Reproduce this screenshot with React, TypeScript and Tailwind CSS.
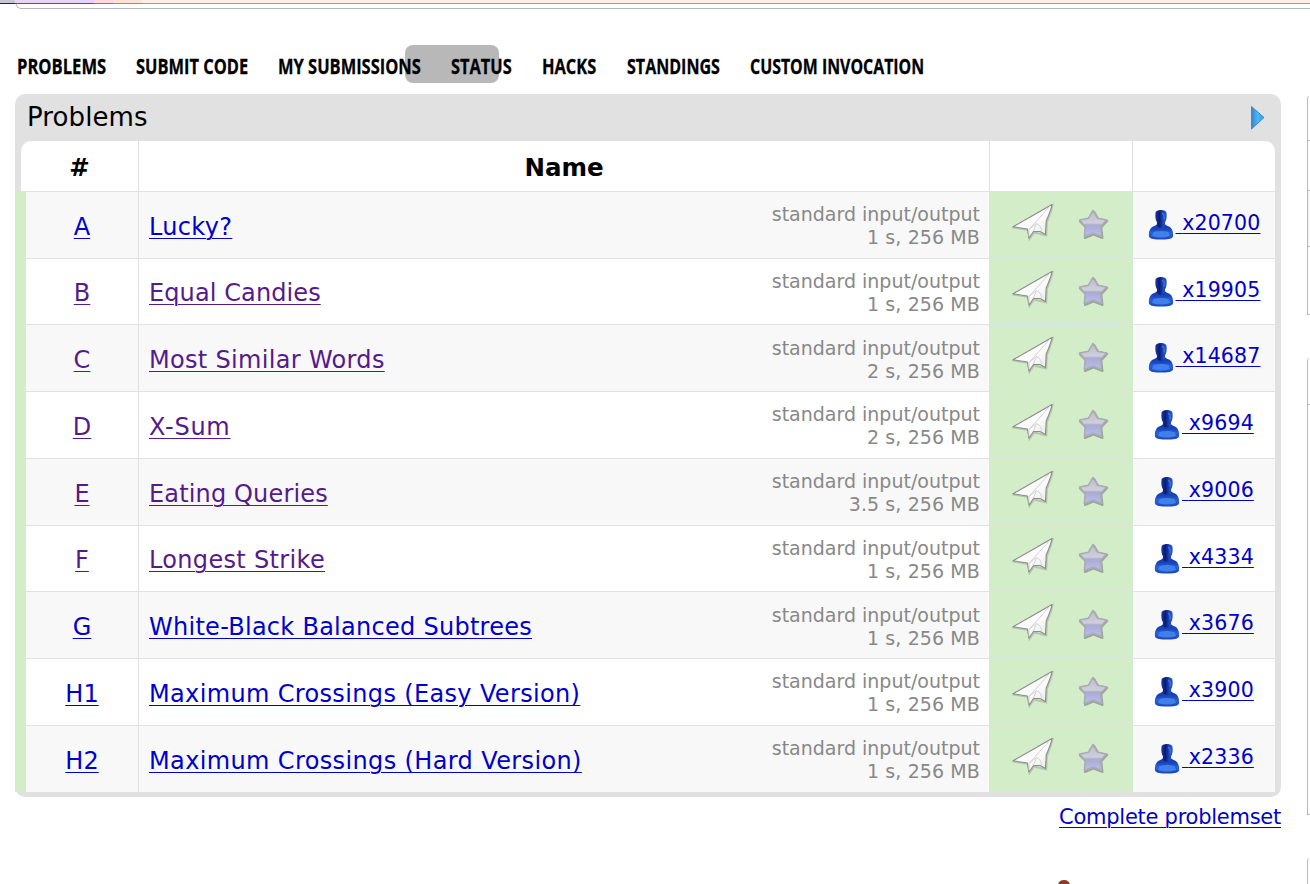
import React from "react";

const problems = [
  { id: "A", name: "Lucky?", limit: "1 s, 256 MB", solved: "x20700", visited: false, h: "h-[67px]", lead: "leading-[71px]", track: "tracking-[.33px]", pad: "pt-[11px]" },
  { id: "B", name: "Equal Candies", limit: "1 s, 256 MB", solved: "x19905", visited: true, h: "h-[66px]", lead: "leading-[69px]", track: "tracking-[.1px]", pad: "pt-[11px]" },
  { id: "C", name: "Most Similar Words", limit: "2 s, 256 MB", solved: "x14687", visited: true, h: "h-[67px]", lead: "leading-[71px]", track: "tracking-[.32px]", pad: "pt-[12px]" },
  { id: "D", name: "X-Sum", limit: "2 s, 256 MB", solved: "x9694", visited: true, h: "h-[67px]", lead: "leading-[71px]", track: "tracking-[.75px]", pad: "pt-[11px]" },
  { id: "E", name: "Eating Queries", limit: "3.5 s, 256 MB", solved: "x9006", visited: true, h: "h-[67px]", lead: "leading-[71px]", track: "tracking-[.15px]", pad: "pt-[11px]" },
  { id: "F", name: "Longest Strike", limit: "1 s, 256 MB", solved: "x4334", visited: true, h: "h-[66px]", lead: "leading-[69px]", track: "tracking-[.33px]", pad: "pt-[11px]" },
  { id: "G", name: "White-Black Balanced Subtrees", limit: "1 s, 256 MB", solved: "x3676", visited: false, h: "h-[67px]", lead: "leading-[71px]", track: "tracking-[.27px]", pad: "pt-[12px]" },
  { id: "H1", name: "Maximum Crossings (Easy Version)", limit: "1 s, 256 MB", solved: "x3900", visited: false, h: "h-[67px]", lead: "leading-[71px]", track: "tracking-[.35px]", pad: "pt-[11px]" },
  { id: "H2", name: "Maximum Crossings (Hard Version)", limit: "1 s, 256 MB", solved: "x2336", visited: false, h: "h-[67px]", lead: "leading-[71px]", track: "tracking-[.37px]", pad: "pt-[11px]" },
];

const menu = [
  { label: "PROBLEMS", w: "w-[89px]", scale: "scale-x-[.79]" },
  { label: "SUBMIT CODE", w: "w-[112px]", scale: "scale-x-[.782]" },
  { label: "MY SUBMISSIONS", w: "w-[143px]", scale: "scale-x-[.784]" },
  { label: "STATUS", w: "w-[61px]", scale: "scale-x-[.78]" },
  { label: "HACKS", w: "w-[55px]", scale: "scale-x-[.78]" },
  { label: "STANDINGS", w: "w-[93px]", scale: "scale-x-[.764]" },
  { label: "CUSTOM INVOCATION", w: "w-[174px]", scale: "scale-x-[.757]" },
];

function Plane() {
  return (
    <svg className="block h-[40px] w-[44px] shrink-0" viewBox="0 0 44 40">
      <defs>
        <linearGradient id="paper" x1="0" y1="0" x2="1" y2="1">
          <stop offset="0" stopColor="#fff" />
          <stop offset=".6" stopColor="#fafafa" />
          <stop offset="1" stopColor="#e2e2e2" />
        </linearGradient>
      </defs>
      <path d="M1.500 25.500 40.500 3.200Q39.500 8.500 34.800 20L34.200 33.500 22 30.500 17.500 37 15.800 27.800Z" fill="none" stroke="#8e9a86" strokeOpacity=".45" strokeWidth="2" />
      <path d="M1 24.800 40 2.500Q39 8 34.200 19L33.500 32.500 28 29.500 21.500 29.500 17 36 15.500 27Z" fill="url(#paper)" stroke="#8c8c8c" strokeWidth="1.1" strokeLinejoin="round" />
      <path d="M38 4 17 27.500V34M17 27.500 24.500 21.500Q30 24 29.500 30M21.500 29 24.500 21.500" fill="none" stroke="#d4d4d4" strokeWidth="1" />
    </svg>
  );
}

function Star() {
  return (
    <svg className="block h-[32px] w-[32px] shrink-0" viewBox="0 0 32 32">
      <defs>
        <linearGradient id="star" x1="0" y1="0" x2="0" y2="1">
          <stop offset="0" stopColor="#bcbdc4" />
          <stop offset=".48" stopColor="#cfcfdc" />
          <stop offset=".56" stopColor="#a9abd0" />
          <stop offset="1" stopColor="#bcbef0" />
        </linearGradient>
      </defs>
      <path d="M16.800 3.200 21.300 11 30.300 12.800 24.300 19.300 25.500 30 16.500 26.500 8 30 8.800 19.300 2.500 13" fill="none" stroke="#727a70" strokeOpacity=".6" strokeWidth="2" strokeLinejoin="round" />
      <path d="M16 2.500 20.700 10.300 29.500 12 23.700 18.500 24.700 28.500 16 25.300 7.300 28.500 8.300 18.500 2.500 12 11.300 10.300Z" fill="url(#star)" stroke="#a9aaba" strokeWidth="1.500" strokeLinejoin="round" />
    </svg>
  );
}

function Person() {
  return (
    <svg className="block h-[32px] w-[26px] shrink-0" viewBox="0 0 26 32">
      <defs>
        <linearGradient id="head" x1="0" y1="0" x2="1" y2="0">
          <stop offset="0" stopColor="#1a3aa6" />
          <stop offset=".35" stopColor="#0b1a70" />
          <stop offset=".7" stopColor="#1c48bd" />
          <stop offset="1" stopColor="#2a56c4" />
        </linearGradient>
        <linearGradient id="body" x1="0" y1="0" x2="0" y2="1">
          <stop offset="0" stopColor="#123099" />
          <stop offset=".4" stopColor="#1b49c0" />
          <stop offset=".6" stopColor="#2a62dc" />
          <stop offset="1" stopColor="#1b48b4" />
        </linearGradient>
      </defs>
      <path d="M9 14H17C17 16.500 19 16.500 21 17.500C24.500 19.500 25.500 23.500 25 27.500C24 30.200 19 30.500 13 30.500S2 30.200 1 27.500C.5 23.500 1.500 19.500 5 17.500C7 16.500 9 16.500 9 14Z" fill="url(#body)" />
      <path d="M5.500 23Q13 21 20.500 23L22 27Q13 30 4 27Z" fill="#4080ea" />
      <path d="M7.500 4C7.500 0 18.500 0 18.500 4C19 8 18.500 11 17 13.500L17 17C15 19 11 19 9 17L9 13.500C7.500 11 7 8 7.500 4Z" fill="url(#head)" />
      <path d="M14.500 4.500Q17 6 16 10" fill="none" stroke="#3b70dc" strokeWidth="1.500" strokeLinecap="round" />
    </svg>
  );
}

function SideBoxes() {
  return (
    <div className="mt-[2px] flex w-[3px] shrink-0 flex-col">
      <div className="h-[219px] rounded-tl-[6px] border-b border-l border-[#b9b9b9]">
        <div className="mt-[44px] h-[51px] border-y border-[#b9b9b9]" />
        <div className="h-[56px] border-b border-[#b9b9b9] bg-[#f8f8f8]" />
      </div>
      <div className="mt-[43px] h-[457px] rounded-tl-[6px] border-b border-l border-[#b9b9b9]">
        <div className="h-[47px] border-b border-[#b9b9b9]" />
      </div>
      <div className="mt-[43px] h-[27px] rounded-tl-[6px] border-l border-[#b9b9b9]" />
    </div>
  );
}

export default function App() {
  return (
    <div className="h-[884px] w-[1310px] overflow-hidden bg-white font-['DejaVu_Sans',sans-serif] text-black">
      <div className="flex h-[4px]">
        <div className="w-[15px] border-b border-[#2a2340] bg-[#c9c5d3]" />
        <div className="w-[79px] border-b border-[#6a3fb0] bg-[#e5d3f8]" />
        <div className="w-[19px] border-b border-[#b0607a] bg-[#fbd9df]" />
        <div className="w-[29px] border-b border-[#c08060] bg-[#fde4d6]" />
        <div className="flex-1 border-b border-[#c09078] bg-[#fdf0e6]" />
      </div>
      <div className="ml-[16px] h-[5px] rounded-bl-[7px] border-b border-l border-[#b5b5b5]" />
      <nav className="relative ml-[17px] mt-[36px] flex h-[38px] items-center gap-[30px]">
        <div className="absolute left-[388px] top-0 h-[38px] w-[94px] rounded-[8px] bg-[#b8b8b8]" />
        {menu.map((m) => (
          <a key={m.label} className={`relative block pt-[3px] ${m.w} font-['Open_Sans',sans-serif] text-[21px] font-bold leading-[38px]`}>
            <span className={`block origin-left whitespace-nowrap [-webkit-text-stroke:.3px_black] ${m.scale}`}>{m.label}</span>
          </a>
        ))}
      </nav>
      <div className="ml-[15px] mt-[11px] flex gap-[26px]">
        <main className="w-[1266px] shrink-0">
          <section className="h-[703px] rounded-[10px] bg-[#e1e1e1]">
            <div className="flex h-[47px] items-center justify-between pl-[12px] pr-[16px]">
              <h1 className="text-[26px] leading-[49px] tracking-[.1px]">Problems</h1>
              <svg className="h-[26px] w-[15px]" viewBox="0 0 15 26">
                <defs>
                  <linearGradient id="arrow" x1="0" y1="0" x2="1" y2="0">
                    <stop offset="0" stopColor="#3384cf" />
                    <stop offset=".5" stopColor="#4db8f5" />
                    <stop offset="1" stopColor="#3b9be0" />
                  </linearGradient>
                </defs>
                <path d="M1.500 1.500 14 12.500 1.500 24Z" fill="url(#arrow)" stroke="#3a8bd0" strokeWidth="1" />
              </svg>
            </div>
            <div className="mx-[6px] flex h-[50px] rounded-t-[10px] bg-white text-center text-[24.500px] font-bold leading-[53px]">
              <div className="w-[118px] border-r border-[#e1e1e1]">#</div>
              <div className="w-[851px] border-r border-[#e1e1e1]">Name</div>
              <div className="w-[143px] border-r border-[#e1e1e1]" />
              <div className="flex-1" />
            </div>
            {problems.map((p, i) => (
              <div key={p.id} className={`mr-[6px] flex ${p.h}`}>
                <div className="w-[11px] bg-[#d4edc9]" />
                <div className={`flex flex-1 border-t border-[#e1e1e1] ${i % 2 ? "bg-white" : "bg-[#f8f8f8]"}`}>
                  <div className={`w-[113px] border-r border-[#e1e1e1] text-center text-[24px] underline decoration-[1px] underline-offset-[3px] ${p.lead} ${p.visited ? "text-[#551a8b]" : "text-[#0000cc]"}`}>{p.id}</div>
                  <div className="flex w-[850px] justify-between pl-[10px] pr-[9px]">
                    <a className={`whitespace-nowrap text-[24px] underline decoration-[1px] underline-offset-[3px] ${p.track} ${p.lead} ${p.visited ? "text-[#551a8b]" : "text-[#0000cc]"}`}>{p.name}</a>
                    <div className={`text-right text-[19px] leading-[23px] text-[#888] ${p.pad}`}>
                      <div>standard input/output</div>
                      <div className="tracking-[.1px]">{p.limit}</div>
                    </div>
                  </div>
                  <div className="flex w-[144px] bg-[#d4edc9] pl-[23px] pt-[10px]">
                    <Plane />
                    <div className="ml-[21px] mt-[6px]"><Star /></div>
                  </div>
                  <div className="flex flex-1 justify-center pt-[17px]">
                    <Person />
                    <a className="ml-[2px] whitespace-pre text-[20.500px] leading-[29px] tracking-[.15px] text-[#0000cc] underline decoration-[1px] underline-offset-[3px]"> {p.solved}</a>
                  </div>
                </div>
              </div>
            ))}
          </section>
          <div className="mt-[8px] text-right text-[21px] leading-[24px] tracking-[-.26px] text-[#0000cc] underline decoration-[1px] underline-offset-[3px]">Complete problemset</div>
          <svg className="ml-[1042px] mt-[50px] h-[5px] w-[16px]" viewBox="0 0 16 5">
            <ellipse cx="7" cy="6" rx="6" ry="5" fill="#8d3a2d" />
          </svg>
        </main>
        <SideBoxes />
      </div>
    </div>
  );
}
